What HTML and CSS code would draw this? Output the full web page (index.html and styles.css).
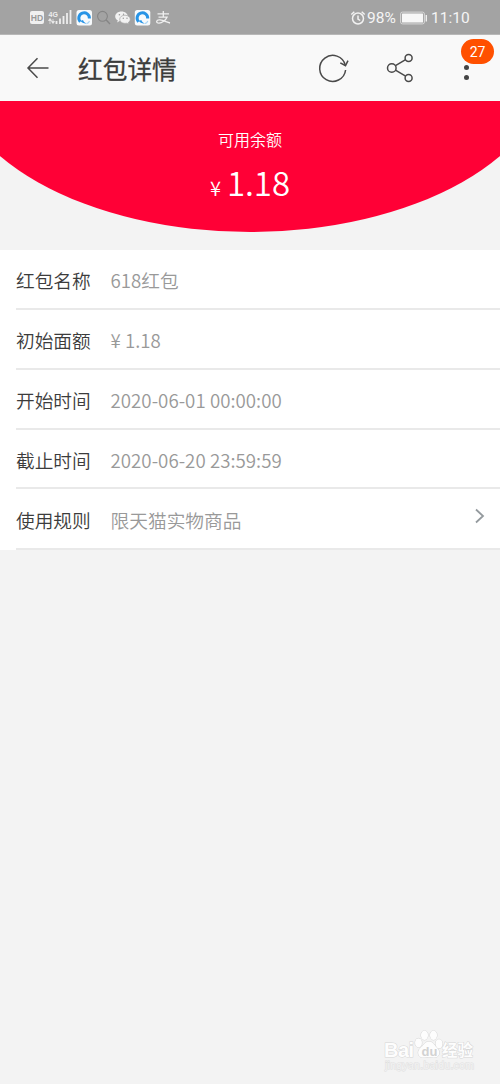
FILE: index.html
```html
<!DOCTYPE html>
<html lang="zh-CN">
<head>
    <meta charset="UTF-8">
    <meta name="viewport" content="width=device-width, initial-scale=1.0">
    <title>红包详情</title>
    <link rel="stylesheet" href="styles.css">
</head>
<body>
    <div class="status-bar">
        <div class="status-left">
            <svg class="status-icons" width="150" height="34" viewBox="0 0 150 34">
                <!-- HD -->
                <rect x="4" y="11" width="14" height="13" rx="2" fill="#f0f0f0"/>
                <text class="hd-text" x="4.800" y="20.800" textLength="12.400" lengthAdjust="spacingAndGlyphs">HD</text>
                <!-- 4G signal -->
                <text class="net-text" x="22.500" y="17">4G</text>
                <path d="M22.500 20.500h3l-1.500-2zM24 20v4M25.500 21.500h3l-1.500 2zM27 19v4" fill="#eee" stroke="#eee" stroke-width=".7"/>
                <path d="M30.500 24v-3M34 24v-5.500M37.500 24v-8M41 24v-11M44.500 24v-14" stroke="#eee" stroke-width="1.800"/>
                <!-- browser -->
                <g id="browser">
                    <rect x="50.500" y="10" width="15.500" height="15.500" rx="2.500" fill="#f7fafc"/>
                    <path d="M54.300 21.800A5.300 5.300 0 1 1 63.400 18.500" fill="none" stroke="#2794e6" stroke-width="3"/>
                    <path d="M54.500 21c1.500 2 4 2.800 6.500 2.300-2-.3-3.500-1.500-4-3.300z" fill="#2794e6"/>
                    <path d="M60.500 23.600c1.500-.3 2.500-1.200 3-2.600" stroke="#a9d5f5" stroke-width="1.200" fill="none"/>
                </g>
                <!-- search -->
                <circle cx="76.500" cy="16.300" r="4.900" fill="none" stroke="#858585" stroke-width="1.100"/>
                <path d="M80.200 20l3.800 4" stroke="#858585" stroke-width="1.400"/>
                <!-- wechat -->
                <g transform="translate(-6 0)">
                    <path d="M101.500 11.500c3.600 0 6.300 2.200 6.300 4.900s-2.700 4.900-6.300 4.900c-.7 0-1.300-.1-1.900-.2l-2.500 1.300.7-2.100c-1.600-.9-2.600-2.300-2.600-3.900 0-2.700 2.700-4.900 6.300-4.900z" fill="#f2f2f2"/>
                    <path d="M105 15.200c3 0 5.300 1.800 5.300 4.100 0 1.300-.8 2.500-2 3.200l.5 1.800-2-1.100c-.6.100-1.200.2-1.800.2-3 0-5.300-1.800-5.300-4.100s2.300-4.100 5.300-4.100z" fill="#f2f2f2" stroke="#a3a3a3" stroke-width=".7"/>
                    <g fill="#999"><circle cx="99.400" cy="14.800" r=".8"/><circle cx="103.500" cy="14.200" r=".7"/><circle cx="103.300" cy="18.300" r=".7"/><circle cx="107" cy="18.300" r=".7"/></g>
                </g>
                <use href="#browser" x="58.300"/>
                <!-- alipay -->
                <path d="M131.500 13.800h11.500M137.300 11v6M132.500 17.200h8.500c-1.300 3-5 6-8 6-3.500 0-3-3.800 1-3.300 3.500.4 6.500 2.200 10 3.100" fill="none" stroke="#f0f0f0" stroke-width="1.300"/>
            </svg>
        </div>
        <div class="status-right">
            <svg width="16" height="16" viewBox="0 0 16 16" fill="none" stroke="#f2f2f2" stroke-width="1.500">
                <circle cx="8" cy="8.500" r="5.500"/>
                <path d="M8 5.500v3.500l2.200 1.500M1.300 4.500l3-2.700M14.700 4.500l-3-2.700"/>
            </svg>
            <span class="percent">98%</span>
            <svg class="battery" width="28" height="14" viewBox="0 0 28 14">
                <rect x=".6" y="1.100" width="23.800" height="11.800" rx="1.800" fill="none" stroke="#d8d8d8"/>
                <rect x="2" y="2.500" width="21" height="9" rx=".5" fill="#f7f7f7"/>
                <path d="M26.300 4v6.500" stroke="#eee" stroke-width="1.400"/>
            </svg>
            <span class="clock">11:10</span>
        </div>
    </div>

    <header class="title-bar">
        <svg class="back" width="24" height="24" viewBox="0 0 24 24">
            <path d="M22.500 12H2M11.500 2.300L2 12l9.500 9.700"/>
        </svg>
        <h1>红包详情</h1>
        <div class="actions">
            <svg width="34" height="32" viewBox="0 0 34 32">
                <path d="M28.600 18A13 13 0 1 1 28.300 13.200"/>
                <path d="M23.300 10.800l5.200 2.900 2.500-5"/>
            </svg>
            <svg class="share" width="30" height="32" viewBox="0 0 30 32">
                <circle cx="6.800" cy="16" r="4.300"/>
                <circle cx="23.600" cy="5.900" r="3.500"/>
                <circle cx="23.600" cy="26" r="3.500"/>
                <path d="M10.500 13.700l10.100-6M10.500 18.200l10.100 6"/>
            </svg>
            <div class="more">
                <i></i><i></i>
                <span class="badge">27</span>
            </div>
        </div>
    </header>

    <section class="balance">
        <div class="balance-inner">
            <p class="balance-label">可用余额</p>
            <p class="balance-amount"><small>¥</small>1.18</p>
        </div>
    </section>

    <ul class="info-list">
        <li><span class="label">红包名称</span><span class="value">618红包</span></li>
        <li><span class="label">初始面额</span><span class="value">¥ 1.18</span></li>
        <li><span class="label">开始时间</span><span class="value">2020-06-01 00:00:00</span></li>
        <li class="short"><span class="label">截止时间</span><span class="value">2020-06-20 23:59:59</span></li>
        <li class="rule">
            <span class="label">使用规则</span><span class="value">限天猫实物商品</span>
            <svg class="chevron" width="10" height="16" viewBox="0 0 10 16"><path d="M1 1.500L8 8l-7 6.500"/></svg>
        </li>
    </ul>

    <footer class="watermark">
        <svg width="100" height="52" viewBox="0 0 100 52">
            <g class="mark">
                <ellipse cx="41.500" cy="14.800" rx="3.400" ry="4.400"/>
                <ellipse cx="47.500" cy="7.200" rx="3.500" ry="4.700"/>
                <ellipse cx="56.500" cy="7.200" rx="3.500" ry="4.700"/>
                <ellipse cx="62" cy="15.800" rx="3.400" ry="4.500"/>
                <path d="M52 13.500c4 0 5.500 4 8.500 7 3.500 3.500 1.500 9-2.500 9-2.500 0-4-.6-6-.6s-4 .6-6.500.6c-4 0-6-5.500-2.500-9 3.500-3 5-7 9-7z"/>
                <text class="bai" x="7" y="29" textLength="30">Bai</text>
                <text class="jingyan" x="65" y="28" textLength="31">经验</text>
                <text class="site" x="8" y="41" textLength="89">jingyan.baidu.com</text>
            </g>
            <text class="du" x="44.500" y="27.500">du</text>
        </svg>
    </footer>
</body>
</html>
```

FILE: styles.css
```css
* {
    box-sizing: border-box;
}
body {
    margin: 0;
    height: 1084px;
    display: flex;
    flex-direction: column;
    background-color: #f3f3f3;
    color: #3c3c3c;
    font-family: "Noto Sans CJK SC", sans-serif;
    overflow: hidden;
}
h1, p, ul {
    margin: 0;
    padding: 0;
}
.status-bar {
    display: flex;
    justify-content: space-between;
    height: 35px;
    padding: 0 30px 0 26px;
    background-color: #a3a3a3;
    border-bottom: 1px solid #b8b8b8;
    color: #f5f5f5;
    font-family: Roboto, sans-serif;
}
.status-right {
    display: flex;
    align-items: center;
    padding-top: 1px;
    font-size: 15.5px;
}
.percent {
    width: 30px;
    margin: 0 3px 0 1px;
    white-space: nowrap;
}
.clock {
    width: 39px;
    margin-left: 3px;
    white-space: nowrap;
}
.hd-text {
    font: bold 9px "Liberation Sans", sans-serif;
    fill: #999;
}
.net-text {
    font: bold 7px "Liberation Sans", sans-serif;
    fill: #eee;
}
.title-bar {
    display: flex;
    align-items: center;
    height: 66px;
    padding: 0 28px 0 26px;
    background-color: #f9f9f9;
}
.title-bar svg {
    fill: none;
    stroke: #4a4a4a;
    stroke-width: 1.5;
}
.title-bar h1 {
    margin-left: 28px;
    font-size: 24.7px;
    font-weight: 400;
    line-height: 66px;
    -webkit-text-stroke: .3px #3c3c3c;
}
.actions {
    display: flex;
    align-items: center;
    margin-left: auto;
}
.actions .share {
    margin: 0 46px 0 34px;
}
.more {
    position: relative;
    display: flex;
    flex-direction: column;
    justify-content: flex-end;
    gap: 4.6px;
    width: 11px;
    height: 24px;
}
.more i {
    width: 5px;
    height: 5px;
    margin-left: 3px;
    border-radius: 50%;
    background-color: #444;
}
.badge {
    position: absolute;
    top: -17px;
    left: 0;
    width: 33px;
    height: 25px;
    border-radius: 13px;
    background-color: #ff5000;
    color: #fff;
    font: 14px/26px Roboto, sans-serif;
    text-align: center;
}
.balance {
    height: 149px;
}
.balance-inner {
    height: 131px;
    padding-top: 26px;
    background-color: #ff0036;
    clip-path: ellipse(300px 170px at 50% -39px);
    color: #fff;
    text-align: center;
}
.balance-label {
    font-size: 16px;
    font-weight: 350;
    line-height: 24px;
}
.balance-amount {
    font-size: 33px;
    line-height: 48px;
    margin-top: 7px;
    font-weight: 350;
}
.balance-amount small {
    font-size: 20px;
    margin-right: 6px;
}
.info-list {
    padding-left: 16px;
    background-color: #fff;
    list-style: none;
}
.info-list li {
    display: flex;
    align-items: center;
    height: 60px;
    border-bottom: 2px solid #e9e9e9;
    font-size: 18.7px;
    font-weight: 350;
}
.info-list .short {
    height: 59px;
    padding-top: 2px;
}
.info-list .rule {
    height: 61px;
    padding-top: 2px;
}
.label {
    width: 94.5px;
}
.value {
    color: #999;
    letter-spacing: .03px;
}
.chevron {
    margin: -8px 15px 0 auto;
    fill: none;
    stroke: #949a9e;
    stroke-width: 1.8;
}
.watermark {
    margin-top: auto;
    display: flex;
    justify-content: flex-end;
    padding: 0 23px 4px 0;
}
.mark {
    fill: #fdfdfd;
    stroke: #d6d6d6;
    stroke-width: 1;
    paint-order: stroke;
}
.bai {
    font: bold 20px "Liberation Sans", sans-serif;
}
.jingyan {
    font: bold 15.5px "Noto Sans CJK SC", sans-serif;
}
.site {
    font: 10.5px "Liberation Sans", sans-serif;
    fill: #f3f3f3;
    stroke: #e0e0e0;
}
.du {
    font: bold 13px "Liberation Sans", sans-serif;
    fill: #d2d2d2;
}
```
